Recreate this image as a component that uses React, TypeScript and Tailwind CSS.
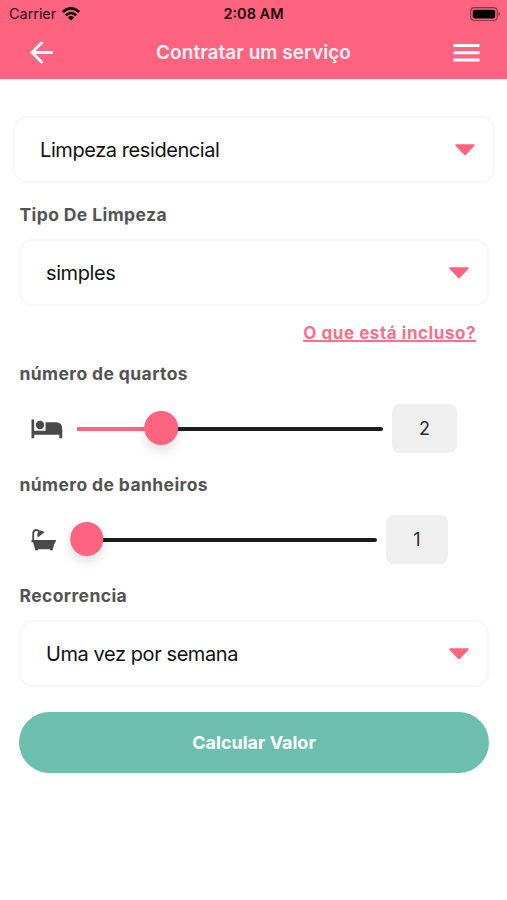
import React from 'react';

const Label: React.FC<{ children: React.ReactNode; className?: string }> = ({ children, className = '' }) => (
  <div className={`pl-[19.5px] text-[17.5px] leading-6 font-bold tracking-[0.4px] text-[#535353] ${className}`}>
    <span>{children}</span>
  </div>
);

interface SelectProps {
  value: string;
  wide?: boolean;
}

const Select: React.FC<SelectProps> = ({ value, wide }) => (
  <button
    className={`flex h-[67px] items-center justify-between rounded-[14px] border-2 border-[#f7f7f7] bg-white pr-[18px] pl-[25px] text-left ${
      wide ? 'mr-[12px] ml-[13px]' : 'mr-[18px] ml-[19px]'
    }`}
  >
    <span className="text-[20px] leading-7 tracking-[-0.42px] whitespace-nowrap text-[#111]">{value}</span>
    <svg width="20" height="12" viewBox="0 0 20 12" fill="#fe6480">
      <path d="M1 0.2h18q1.2 0.5 0.5 1.5L11 10.7q-1 1-2 0L0.5 1.7Q-0.2 0.7 1 0.2z" />
    </svg>
  </button>
);

interface SliderProps {
  percent: number;
  className: string;
}

const Slider: React.FC<SliderProps> = ({ percent, className }) => (
  <div className={`relative h-1 rounded-full bg-[#1c1c1e] ${className}`}>
    <div className="h-1 rounded-full bg-[#fe6480]" style={{ width: `${percent}%` }} />
    <div
      className="absolute -top-[15.5px] size-[33.5px] -translate-x-1/2 rounded-full bg-[#fe6480] shadow-[0_6px_12px_rgba(0,0,0,0.12)]"
      style={{ left: `${percent}%` }}
    />
  </div>
);

const BedIcon = () => (
  <svg width="33" height="20" viewBox="0 0 33 20" fill="#4a4a4a">
    <path d="M0.5 0.5h2.7v11.3H31.2v7.4h-2.9v-3.4H3.2v3.4H0.5z" />
    <circle cx="9" cy="6" r="4.2" />
    <path d="M14.5 3.2h10.7q6 0.5 6 6.3v4H14.5z" />
  </svg>
);

const BathIcon = () => (
  <svg width="26" height="24" viewBox="0 0 26 24" fill="#4a4a4a">
    <path d="M2.2 13V5.2Q2.5 2 5.4 2Q7 2 8 3.4" fill="none" stroke="#4a4a4a" strokeWidth="1.8" />
    <path d="M6.8 9.5Q5.2 4.5 8.8 2.2L13.8 4z" />
    <path d="M0.5 12h24.3v2.2h-0.9l-2 6.6v1.5h-3v-1H7v1H4v-1.5l-2-6.6H0.5z" />
  </svg>
);

const App: React.FC = () => {
  return (
    <div className="h-[900px] w-[507px] overflow-hidden bg-white font-[Inter,'Liberation_Sans',sans-serif]">
      <header className="h-[79px] bg-[#fe6480]">
        <div className="grid h-7 grid-cols-3 items-center pr-[6px] pl-[9px]">
          <div className="flex items-center gap-[6px] text-[14.5px] tracking-[-0.05px] text-[#2b1016]">
            <span>Carrier</span>
            <svg width="18" height="14" viewBox="0 0 18 14" fill="none" stroke="#000" strokeWidth="2.5">
              <path d="M0.8 5Q9-2.3 17.2 5M3.8 8.2Q9 3.7 14.2 8.2" />
              <path d="M9 13.6L5.8 10.4Q9 7.8 12.2 10.4z" fill="#000" stroke="none" />
            </svg>
          </div>
          <div className="pr-[3px] text-center text-[14.5px] font-semibold text-[#1a060a]">
            <span>2:08 AM</span>
          </div>
          <svg className="justify-self-end" width="31" height="15" viewBox="0 0 31 15" fill="none">
            <rect x="0.7" y="0.7" width="26.5" height="12.8" rx="3.5" stroke="#8c3746" strokeWidth="1.2" />
            <rect x="2.7" y="2.7" width="22.5" height="8.8" rx="1.8" fill="#000" />
            <path d="M28.5 4.8q3 2.2 0 4.6z" fill="#8c3746" />
          </svg>
        </div>
        <div className="flex h-[49px] items-center justify-between pr-[27px] pl-[30px]">
          <svg width="24" height="24" viewBox="0 0 24 24" fill="none" stroke="#fff" strokeWidth="2.8">
            <path d="M23 11.5H2M12.5 1L2 11.5L12.5 22" />
          </svg>
          <h1 className="pt-px text-[19px] font-semibold tracking-[0.04px] text-[#fff3f5]">
            <span>Contratar um serviço</span>
          </h1>
          <svg width="27" height="20" viewBox="0 0 27 20" fill="#fff">
            <path d="M0.5 1h26v3h-26zM0.5 8.3h26v3h-26zM0.5 15.6h26v3h-26z" />
          </svg>
        </div>
      </header>

      <main className="flex flex-col pt-[37px]">
        <Select value="Limpeza residencial" wide />
        <Label className="mt-5 mb-3">Tipo De Limpeza</Label>
        <Select value="simples" />
        <a className="mt-[15px] mr-[31px] mb-px self-end text-[17px] leading-6 font-bold tracking-[0.55px] text-[#f8708a] underline decoration-2 underline-offset-1 [text-decoration-skip-ink:none]">
          O que está incluso?
        </a>
        <Label className="mt-4">número de quartos</Label>
        <div className="mt-[18px] flex h-[49px] items-center pl-[31px]">
          <BedIcon />
          <Slider percent={27.6} className="ml-[13px] w-[306px]" />
          <div className="ml-[9px] flex h-[49px] w-[65px] items-center justify-center rounded-lg bg-[#efefef] text-[18px] text-[#2b2b2b]">
            2
          </div>
        </div>
        <Label className="mt-5">número de banheiros</Label>
        <div className="mt-[18px] flex h-[49px] items-center pl-[31px]">
          <BathIcon />
          <Slider percent={5.2} className="ml-[14px] w-[306px]" />
          <div className="ml-[9px] flex h-[49px] w-[62px] items-center justify-center rounded-lg bg-[#efefef] text-[18px] text-[#2b2b2b]">
            1
          </div>
        </div>
        <Label className="mt-5 mb-3">Recorrencia</Label>
        <Select value="Uma vez por semana" />
        <button className="mt-[25px] mr-[18px] ml-[19px] h-[61px] rounded-full bg-[#6cbfaf] text-[18px] font-bold text-white">
          <span>Calcular Valor</span>
        </button>
      </main>
    </div>
  );
};

export default App;
